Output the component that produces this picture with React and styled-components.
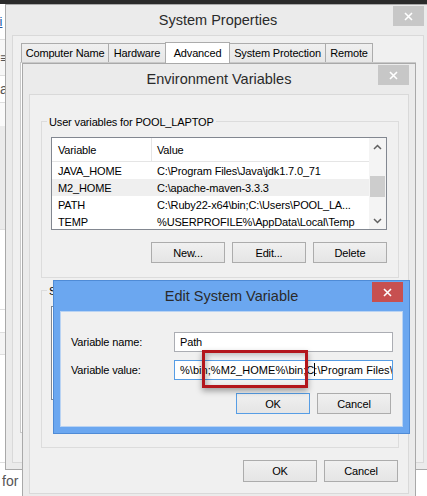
import React from "react";
import styled, { createGlobalStyle } from "styled-components";

const GlobalStyle = createGlobalStyle`
  html, body { margin: 0; padding: 0; background: #fff; }
  * { box-sizing: border-box; }
`;

const UI = `"Liberation Sans", Arial, sans-serif`;

const Desktop = styled.div`
  position: relative;
  width: 427px;
  height: 496px;
  overflow: hidden;
  background: #fff;
  font-family: ${UI};
  font-size: 11px;
  letter-spacing: -0.15px;
  color: #000;
`;

/* background application, only a sliver shows on the left */
const BgApp = styled.div`
  display: flex;
  flex-direction: column;
  height: 100%;
`;

const BgStrip = styled.div`
  flex: none;
  height: 4px;
  background: #2b2b2b;
`;

const BgRow = styled.div`
  flex: ${(p) => (p.$fill ? "1" : "none")};
  height: ${(p) => (p.$h ? `${p.$h}px` : "auto")};
  background: ${(p) => p.$bg || "#fff"};
  border-bottom: 1px solid ${(p) => (p.$line ? "#dedede" : "transparent")};
  display: flex;
  align-items: ${(p) => (p.$bottom ? "flex-end" : "center")};
  padding: ${(p) => (p.$bottom ? "0 0 6px 2px" : "0")};
  font-size: 14px;
  color: #555;
  letter-spacing: 0;
`;

const BgLink = styled.span`
  margin-left: -4px;
  color: #1a5aa8;
  text-decoration: underline;
  font-size: 13px;
`;

/* windows */
const Win = styled.div`
  position: absolute;
  left: ${(p) => p.$x}px;
  top: ${(p) => p.$y}px;
  width: ${(p) => p.$w}px;
  height: ${(p) => p.$h}px;
  background: ${(p) => p.$frame};
  border: 1px solid ${(p) => p.$edge};
  padding: 0 6px 6px;
  display: flex;
  flex-direction: column;
`;

const TitleBar = styled.div`
  flex: none;
  height: 30px;
  display: grid;
  grid-template-columns: 1fr auto 1fr;
  align-items: start;
`;

const Title = styled.div`
  grid-column: 2;
  align-self: center;
  font-size: 14.5px;
  letter-spacing: 0;
  color: #2a2a2a;
  white-space: nowrap;
`;

const Close = styled.div`
  grid-column: 3;
  justify-self: end;
  margin-top: 1px;
  width: 31px;
  height: 20px;
  background: ${(p) => (p.$active ? "#c75050" : "#c7c7c7")};
  display: flex;
  align-items: center;
  justify-content: center;
`;

const Client = styled.div`
  flex: 1;
  background: #f0f0f0;
  border: 1px solid ${(p) => p.$edge || "#d9d9d9"};
  display: flex;
  flex-direction: column;
  min-height: 0;
`;

/* tabs */
const TabRow = styled.div`
  display: flex;
  align-items: flex-end;
  height: 21px;
  margin: 6px 0 -1px 8px;
`;

const Tab = styled.div`
  width: ${(p) => p.$w}px;
  height: ${(p) => (p.$active ? 21 : 19)}px;
  margin-right: -1px;
  margin-bottom: ${(p) => (p.$active ? 0 : 1)}px;
  border: 1px solid #acacac;
  border-bottom: none;
  background: ${(p) => (p.$active ? "#fff" : "linear-gradient(#f0f0f0, #e7e7e7)")};
  position: relative;
  z-index: ${(p) => (p.$active ? 1 : 0)};
  display: flex;
  align-items: center;
  justify-content: center;
  white-space: nowrap;
`;

const TabPanel = styled.div`
  flex: 1;
  margin: 0 7px 29px 7px;
  border: 1px solid #c9c9c9;
  background: #fff;
`;

/* group boxes and list views */
const Group = styled.div`
  flex: none;
  width: 358px;
  height: ${(p) => p.$h}px;
  margin: ${(p) => p.$mt}px 0 0 11px;
  border: 1px solid #dcdcdc;
  display: flex;
  flex-direction: column;
`;

const Legend = styled.div`
  align-self: flex-start;
  margin: -7px 0 0 5px;
  padding: 0 2px;
  line-height: 14px;
  background: #f0f0f0;
  white-space: nowrap;
`;

const ListBox = styled.div`
  flex: none;
  width: 336px;
  height: ${(p) => p.$h}px;
  margin: 8px 0 0 9px;
  border: 1px solid #828790;
  background: #fff;
  display: flex;
  overflow: hidden;
`;

const ListBody = styled.div`
  flex: 1;
  display: flex;
  flex-direction: column;
  overflow: hidden;
`;

const HeaderRow = styled.div`
  flex: none;
  height: 24px;
  display: grid;
  grid-template-columns: 100px 1fr;
  border-bottom: 1px solid #e5e5e5;
`;

const HeaderCell = styled.div`
  display: flex;
  align-items: center;
  padding-left: ${(p) => (p.$first ? 6 : 5)}px;
  border-right: 1px solid ${(p) => (p.$first ? "#e5e5e5" : "transparent")};
`;

const Row = styled.div`
  flex: none;
  height: 17px;
  display: grid;
  grid-template-columns: 100px 1fr;
  align-items: center;
  background: ${(p) => (p.$selected ? "#efefef" : "#fff")};
  white-space: nowrap;
`;

const Cell = styled.div`
  padding-left: ${(p) => (p.$first ? 6 : 5)}px;
  overflow: hidden;
`;

const ScrollBar = styled.div`
  flex: none;
  width: 17px;
  background: #f4f4f4;
  display: flex;
  flex-direction: column;
`;

const ScrollArrow = styled.div`
  flex: none;
  height: 17px;
  display: flex;
  align-items: center;
  justify-content: center;
`;

const ScrollTrack = styled.div`
  flex: 1;
  display: flex;
  flex-direction: column;
  padding-top: 21px;
`;

const Thumb = styled.div`
  height: 21px;
  margin: 0 1px;
  background: #cdcdcd;
`;

/* buttons and fields */
const ButtonRow = styled.div`
  flex: none;
  display: flex;
  justify-content: flex-end;
  gap: 7px;
  margin: ${(p) => p.$mt}px ${(p) => p.$mr}px 0 0;
`;

const Button = styled.button`
  width: 74px;
  height: ${(p) => p.$h || 21}px;
  padding: 0;
  font: inherit;
  letter-spacing: inherit;
  color: #000;
  border: 1px solid ${(p) => (p.$default ? "#569de5" : "#acacac")};
  background: linear-gradient(#f0f0f0, #e5e5e5);
  display: flex;
  align-items: center;
  justify-content: center;
`;

const FieldRow = styled.div`
  display: grid;
  grid-template-columns: 103px 219px;
  align-items: center;
  margin: ${(p) => p.$mt}px 0 0 10px;
`;

const Field = styled.div`
  height: 20px;
  border: 1px solid ${(p) => (p.$focus ? "#569de5" : "#abadb3")};
  background: #fff;
  padding: 0 5px;
  line-height: 18px;
  letter-spacing: ${(p) => (p.$focus ? "0.05px" : "inherit")};
  white-space: nowrap;
  overflow: hidden;
`;

const Caret = styled.span`
  display: inline-block;
  width: 1px;
  height: 13px;
  margin: 0 -1px 0 0;
  background: #000;
  vertical-align: -2px;
`;

const Annotation = styled.div`
  position: absolute;
  left: 202px;
  top: 350px;
  width: 106px;
  height: 38px;
  border: 3px solid #b3161c;
  box-shadow: 0 3px 6px rgba(0, 0, 0, 0.35), inset 3px 2px 5px rgba(0, 0, 0, 0.22);
`;

const CloseIcon = () => (
  <svg width="9" height="9" viewBox="0 0 9 9">
    <path d="M1 1 L8 8 M8 1 L1 8" stroke="#fff" strokeWidth="1.6" />
  </svg>
);

const Chevron = ({ up }) => (
  <svg width="9" height="6" viewBox="0 0 9 6">
    <path
      d={up ? "M1 5 L4.5 1.5 L8 5" : "M1 1 L4.5 4.5 L8 1"}
      stroke="#606060"
      strokeWidth="1.5"
      fill="none"
    />
  </svg>
);

const userVars = [
  ["JAVA_HOME", "C:\\Program Files\\Java\\jdk1.7.0_71"],
  ["M2_HOME", "C:\\apache-maven-3.3.3"],
  ["PATH", "C:\\Ruby22-x64\\bin;C:\\Users\\POOL_LA..."],
  ["TEMP", "%USERPROFILE%\\AppData\\Local\\Temp"],
];

function VarList({ rows, height, selected }) {
  return (
    <ListBox $h={height}>
      <ListBody>
        <HeaderRow>
          <HeaderCell $first>Variable</HeaderCell>
          <HeaderCell>Value</HeaderCell>
        </HeaderRow>
        {rows.map(([name, value], i) => (
          <Row key={name} $selected={i === selected}>
            <Cell $first>{name}</Cell>
            <Cell>{value}</Cell>
          </Row>
        ))}
      </ListBody>
      <ScrollBar>
        <ScrollArrow>
          <Chevron up />
        </ScrollArrow>
        <ScrollTrack>
          <Thumb />
        </ScrollTrack>
        <ScrollArrow>
          <Chevron />
        </ScrollArrow>
      </ScrollBar>
    </ListBox>
  );
}

const tabs = [
  ["Computer Name", 88],
  ["Hardware", 58],
  ["Advanced", 65],
  ["System Protection", 97],
  ["Remote", 48],
];

export default function App() {
  return (
    <>
      <GlobalStyle />
      <Desktop>
        <BgApp>
          <BgStrip />
          <BgRow $h={36} $line>
            <BgLink>fi</BgLink>
          </BgRow>
          <BgRow $h={36} $line $bg="#f7f7f7">
            ≡
          </BgRow>
          <BgRow $h={27} $line>
            a
          </BgRow>
          <BgRow $h={23} $bg="#fafafa" />
          <BgRow $h={104} $bg="#ebebeb" $line />
          <BgRow $h={80} $line />
          <BgRow $h={23} $line />
          <BgRow $h={22} $bg="#f5f5f5" $line />
          <BgRow $h={108} $line />
          <BgRow $fill $bottom>
            for
          </BgRow>
        </BgApp>

        {/* System Properties */}
        <Win $x={5} $y={4} $w={426} $h={466} $frame="#ebebeb" $edge="#a9a9a9">
          <TitleBar>
            <Title>System Properties</Title>
            <Close>
              <CloseIcon />
            </Close>
          </TitleBar>
          <Client>
            <TabRow>
              {tabs.map(([label, w]) => (
                <Tab key={label} $w={w} $active={label === "Advanced"}>
                  {label}
                </Tab>
              ))}
            </TabRow>
            <TabPanel />
          </Client>
        </Win>

        {/* Environment Variables */}
        <Win $x={22} $y={63} $w={394} $h={438} $frame="#ebebeb" $edge="#a9a9a9">
          <TitleBar>
            <Title>Environment Variables</Title>
            <Close>
              <CloseIcon />
            </Close>
          </TitleBar>
          <Client>
            <Group $h={157} $mt={26}>
              <Legend>User variables for POOL_LAPTOP</Legend>
              <VarList rows={userVars} height={93} selected={1} />
              <ButtonRow $mt={12} $mr={11}>
                <Button>New...</Button>
                <Button>Edit...</Button>
                <Button>Delete</Button>
              </ButtonRow>
            </Group>
            <Group $h={158} $mt={12}>
              <Legend>System variables</Legend>
              <ListBox $h={94} />
            </Group>
            <ButtonRow $mt={12} $mr={10}>
              <Button $h={22}>OK</Button>
              <Button $h={22}>Cancel</Button>
            </ButtonRow>
          </Client>
        </Win>

        {/* Edit System Variable */}
        <Win $x={53} $y={280} $w={357} $h={154} $frame="#6ba7f0" $edge="#4f8bd6">
          <TitleBar>
            <Title>Edit System Variable</Title>
            <Close $active>
              <CloseIcon />
            </Close>
          </TitleBar>
          <Client $edge="#b9d3f3">
            <FieldRow $mt={20}>
              <span>Variable name:</span>
              <Field>Path</Field>
            </FieldRow>
            <FieldRow $mt={8}>
              <span>Variable value:</span>
              <Field $focus>
                %\bin;%M2_HOME%\bin;C
                <Caret />
                :\Program Files\Java\jdk1.7.0_71\bin
              </Field>
            </FieldRow>
            <ButtonRow $mt={13} $mr={11}>
              <Button $default>OK</Button>
              <Button>Cancel</Button>
            </ButtonRow>
          </Client>
        </Win>

        <Annotation />
      </Desktop>
    </>
  );
}
